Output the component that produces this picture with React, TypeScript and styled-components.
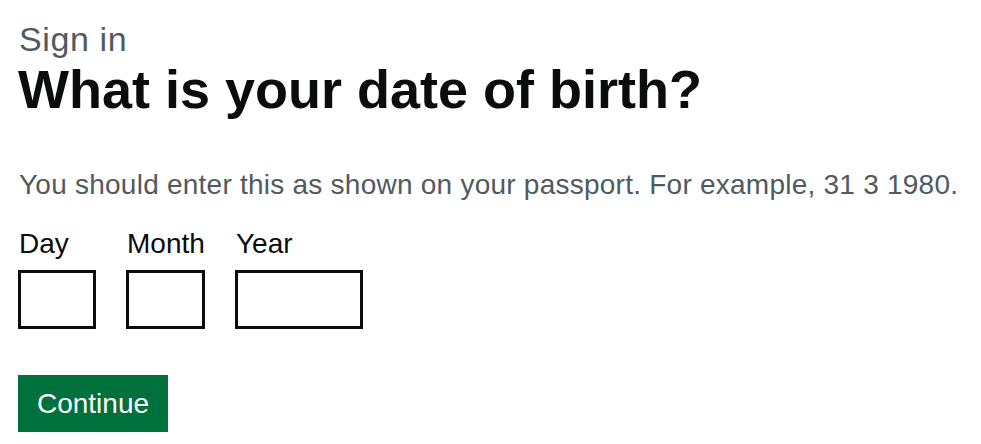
import styled, { createGlobalStyle } from "styled-components";

const GlobalStyle = createGlobalStyle`
  body {
    margin: 0;
    background: #ffffff;
    font-family: "Liberation Sans", Arial, sans-serif;
  }
`;

const Page = styled.main`
  padding: 20px 18px 0 18px;
`;

const Caption = styled.span`
  display: block;
  font-size: 34px;
  line-height: 38px;
  letter-spacing: 0.6px;
  color: #505a5f;
  padding-left: 1px;
`;

const Heading = styled.h1`
  margin: 0 0 47px 0;
  font-size: 54px;
  line-height: 62px;
  font-weight: 700;
  color: #0b0c0c;
`;

const Hint = styled.p`
  margin: 0 0 25px 0;
  font-size: 28px;
  line-height: 36px;
  letter-spacing: 0.24px;
  color: #505a5f;
  padding-left: 1px;
`;

const DateRow = styled.div`
  display: flex;
  gap: 30px;
  margin-bottom: 46px;
`;

const DateItem = styled.div`
  display: flex;
  flex-direction: column;
  gap: 10px;
`;

const Label = styled.label`
  font-size: 28px;
  line-height: 32px;
  color: #0b0c0c;
  padding-left: 1px;
`;

const Input = styled.input<{ $w: number }>`
  box-sizing: border-box;
  width: ${(p) => p.$w}px;
  height: 59px;
  border: 3px solid #0b0c0c;
  border-radius: 0;
  padding: 5px;
  font-size: 28px;
  font-family: inherit;
  outline: none;
`;

const Button = styled.button`
  box-sizing: border-box;
  width: 150px;
  height: 57px;
  border: 0;
  border-radius: 0;
  background: #00703c;
  color: #ffffff;
  font-family: inherit;
  font-size: 28px;
  line-height: 32px;
  box-shadow: 0 3px 0 #002d18;
  cursor: pointer;
  padding: 0;
`;

const App = () => {
  return (
    <Page>
      <GlobalStyle />
      <Caption>Sign in</Caption>
      <Heading>What is your date of birth?</Heading>
      <Hint>You should enter this as shown on your passport. For example, 31 3 1980.</Hint>
      <DateRow>
        <DateItem>
          <Label>Day</Label>
          <Input $w={78} type="text" />
        </DateItem>
        <DateItem>
          <Label>Month</Label>
          <Input $w={79} type="text" />
        </DateItem>
        <DateItem>
          <Label>Year</Label>
          <Input $w={128} type="text" />
        </DateItem>
      </DateRow>
      <Button type="submit">Continue</Button>
    </Page>
  );
};

export default App;
